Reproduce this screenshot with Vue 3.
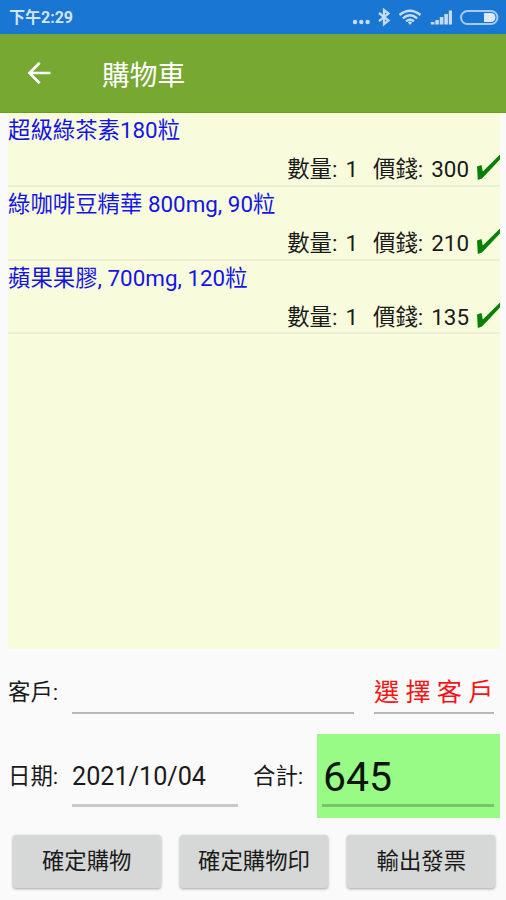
<template>
  <div class="screen">
    <div class="status-bar">
      <span class="time">下午2:29</span>
      <svg class="status-icons" width="148" height="20" viewBox="0 0 148 20">
        <g fill="#c6dcf5">
          <circle cx="4" cy="14" r="2.2" />
          <circle cx="10.3" cy="14" r="2.2" />
          <circle cx="16.6" cy="14" r="2.2" />
        </g>
        <path d="M28 5L37.500 12.600L33 16.200V2L37.500 5.600L28 13.200" fill="none" stroke="#c6dcf5" stroke-width="2.300" />
        <g fill="none" stroke="#c6dcf5" stroke-width="2.400">
          <path d="M48.500 7Q59 -1.600 69.500 7" />
          <path d="M51.800 10.300Q59 4.300 66.200 10.300" />
          <path d="M55 13.400Q59 10 63 13.400" />
        </g>
        <path d="M56.800 14.200Q59 12.600 61.200 14.200L59 17Z" fill="#c6dcf5" />
        <g fill="#c6dcf5">
          <rect x="79.800" y="14" width="3.600" height="2.500" />
          <rect x="84.300" y="12" width="3.600" height="4.500" />
          <rect x="88.800" y="9" width="3.600" height="7.500" />
          <rect x="93.300" y="6" width="3.600" height="10.500" />
          <rect x="97.800" y="2.500" width="3.200" height="14" />
        </g>
        <rect x="110" y="3" width="36.500" height="13" rx="6.500" fill="none" stroke="#a9caf0" stroke-width="2" />
        <path d="M133 5H140A4.500 4.500 0 0 1 140 14H133Z" fill="#dce9fa" />
      </svg>
    </div>

    <header class="toolbar">
      <svg class="back" width="26" height="24" viewBox="0 0 26 24">
        <path d="M24.500 12H3.500M13.700 1.800L3.500 12L13.700 22.200" fill="none" stroke="#fff" stroke-width="2.700" />
      </svg>
      <h1>購物車</h1>
    </header>

    <ul class="cart">
      <li v-for="item in items" :key="item.name" class="item">
        <div class="name">{{ item.name }}</div>
        <div class="detail">
          <span class="label">數量:</span>
          <span class="qty">{{ item.qty }}</span>
          <span class="label">價錢:</span>
          <span class="price">{{ item.price }}</span>
          <svg class="check" width="23" height="29" viewBox="0 0 23 29">
            <path d="M0 14.500L4.500 13L5.800 19.500L23 2.500V7.500L5 26.500L0.800 28Z" fill="#088008" />
          </svg>
        </div>
      </li>
    </ul>

    <div class="row customer-row">
      <span class="label">客戶:</span>
      <div class="field customer"></div>
      <div class="field picker">選 擇 客 戶</div>
    </div>

    <div class="row total-row">
      <span class="label">日期:</span>
      <div class="field date">{{ date }}</div>
      <span class="label total-label">合計:</span>
      <div class="total">
        <div class="field amount">{{ total }}</div>
      </div>
    </div>

    <div class="buttons">
      <button v-for="action in actions" :key="action" type="button">{{ action }}</button>
    </div>
  </div>
</template>

<script setup>
import { ref, computed } from 'vue'

const items = ref([
  { name: '超級綠茶素180粒', qty: 1, price: 300 },
  { name: '綠咖啡豆精華 800mg, 90粒', qty: 1, price: 210 },
  { name: '蘋果果膠, 700mg, 120粒', qty: 1, price: 135 }
])

const date = ref('2021/10/04')
const actions = ['確定購物', '確定購物印', '輸出發票']

const total = computed(() => items.value.reduce((sum, item) => sum + item.price * item.qty, 0))
</script>

<style>
body {
  margin: 0;
  background: #fafafa;
}
</style>

<style scoped>
.screen {
  width: 506px;
  height: 900px;
  display: flex;
  flex-direction: column;
  overflow: hidden;
  background: #fafafa;
  color: #1a1a1a;
  font-family: Roboto, "Noto Sans CJK TC", sans-serif;
  font-size: 22.4px;
  line-height: 30px;
  white-space: nowrap;
}

.status-bar {
  flex: none;
  height: 34px;
  box-sizing: border-box;
  padding: 2px 7px 0 9px;
  display: flex;
  align-items: center;
  justify-content: space-between;
  background: #1976d2;
}

.time {
  color: #d3e4f8;
  font-size: 16px;
  font-weight: 700;
}

.toolbar {
  flex: none;
  height: 79px;
  box-sizing: border-box;
  padding-left: 26px;
  display: flex;
  align-items: center;
  background: #76a832;
  border-bottom: 1px solid #68a01c;
}

.toolbar h1 {
  margin: 0 0 0 50px;
  padding-top: 6px;
  color: #fff;
  font-size: 27.7px;
  font-weight: 400;
}

.cart {
  flex: none;
  height: 536px;
  margin: 0 6px 0 8px;
  padding: 0;
  list-style: none;
  background: #f9fcdc;
}

.item {
  height: 73.8px;
  box-sizing: border-box;
  border-bottom: 2px solid #eceed3;
}

.name {
  height: 39px;
  line-height: 35px;
  color: #1414e6;
}

.detail {
  display: flex;
  height: 34px;
  line-height: 35px;
}

.detail .label:first-child {
  margin-left: auto;
}

.qty {
  margin: 0 15px 0 8px;
}

.price {
  margin: 0 8px;
}

.check {
  flex: none;
}

.row {
  flex: none;
  display: flex;
  align-items: center;
  padding: 0 6px 0 8px;
}

.row .label {
  width: 64px;
  padding-top: 1px;
}

.field {
  box-sizing: border-box;
  border-bottom: 2px solid #b9b9b9;
}

.customer-row {
  height: 84.5px;
}

.customer {
  width: 282px;
  height: 45px;
}

.picker {
  width: 120px;
  height: 45px;
  margin-left: 20px;
  color: #f41414;
  font-size: 25.2px;
  line-height: 48px;
}

.total-row {
  height: 84px;
}

.date {
  width: 166px;
  height: 62px;
  border-bottom: 3px solid #c8c8c8;
  font-size: 25.2px;
  line-height: 63px;
}

.total-row .total-label {
  width: 64px;
  margin-left: 15px;
}

.total {
  flex: 1;
  height: 84px;
  box-sizing: border-box;
  padding: 12px 6px 12px 5px;
  background: #98fb86;
}

.amount {
  height: 61px;
  padding-left: 1px;
  border-bottom: 3px solid #76c568;
  color: #0c160c;
  font-size: 41px;
  line-height: 62px;
}

.buttons {
  display: flex;
  gap: 19px;
  padding: 17px 10.5px 0 12.5px;
}

.buttons button {
  flex: 1;
  height: 53px;
  padding: 0;
  border: none;
  border-radius: 3px;
  background: #d6d8d7;
  box-shadow: 0 1px 3px rgba(0, 0, 0, 0.35);
  color: #1a1a1a;
  font: inherit;
}
</style>
